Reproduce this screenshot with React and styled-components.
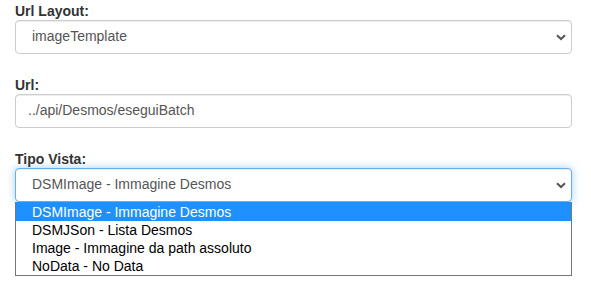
import React from 'react'
import styled, { createGlobalStyle } from 'styled-components'

const GlobalStyle = createGlobalStyle`
  html, body {
    margin: 0;
    padding: 0;
    background: #fff;
  }
  body {
    font-family: "Liberation Sans", Arial, sans-serif;
    font-size: 14px;
    line-height: 1.42857;
    color: #333;
  }
  * { box-sizing: border-box; }
`

const Form = styled.form`
  padding: 2px 19px 0 15px;
`

const FormGroup = styled.div`
  margin-bottom: 22px;
  &:last-child {
    margin-bottom: 0;
  }
`

const Label = styled.label`
  display: block;
  margin: 0;
  font-weight: 700;
  line-height: 18px;
  color: #333;
`

const Control = styled.div`
  display: flex;
  align-items: center;
  justify-content: space-between;
  height: 34px;
  padding: ${p => (p.select ? '6px 5px 6px 16px' : '6px 12px')};
  border: 1px solid ${p => (p.focused ? '#66afe9' : '#ccc')};
  border-radius: 4px;
  background: #fff;
  color: #555;
  box-shadow: inset 0 1px 1px rgba(0, 0, 0, 0.075)
    ${p => (p.focused ? ', 0 0 8px rgba(102, 175, 233, 0.6)' : '')};
`

const Chevron = () => (
  <svg width="10" height="7" viewBox="0 0 10 7">
    <path d="M1 1.2 L5 5 L9 1.2" fill="none" stroke="#555" strokeWidth="2" />
  </svg>
)

// open dropdown of the focused select
const OptionList = styled.ul`
  margin: 0;
  padding: 0;
  list-style: none;
  background: #fff;
  border: 1px solid #767676;
  border-top-color: #1e90ff;
`

const Option = styled.li`
  height: 18px;
  line-height: 18px;
  padding-left: 16px;
  color: ${p => (p.$active ? '#fff' : '#000')};
  background: ${p => (p.$active ? '#1e90ff' : 'transparent')};
`

const options = [
  'DSMImage - Immagine Desmos',
  'DSMJSon - Lista Desmos',
  'Image - Immagine da path assoluto',
  'NoData - No Data',
]

export default function App() {
  return (
    <>
      <GlobalStyle />
      <Form>
        <FormGroup>
          <Label>Url Layout:</Label>
          <Control select>
            <span>imageTemplate</span>
            <Chevron />
          </Control>
        </FormGroup>
        <FormGroup>
          <Label>Url:</Label>
          <Control>
            <span>../api/Desmos/eseguiBatch</span>
          </Control>
        </FormGroup>
        <FormGroup>
          <Label>Tipo Vista:</Label>
          <Control select focused>
            <span>{options[0]}</span>
            <Chevron />
          </Control>
          <OptionList>
            {options.map((o, i) => (
              <Option key={o} $active={i === 0}>{o}</Option>
            ))}
          </OptionList>
        </FormGroup>
      </Form>
    </>
  )
}
